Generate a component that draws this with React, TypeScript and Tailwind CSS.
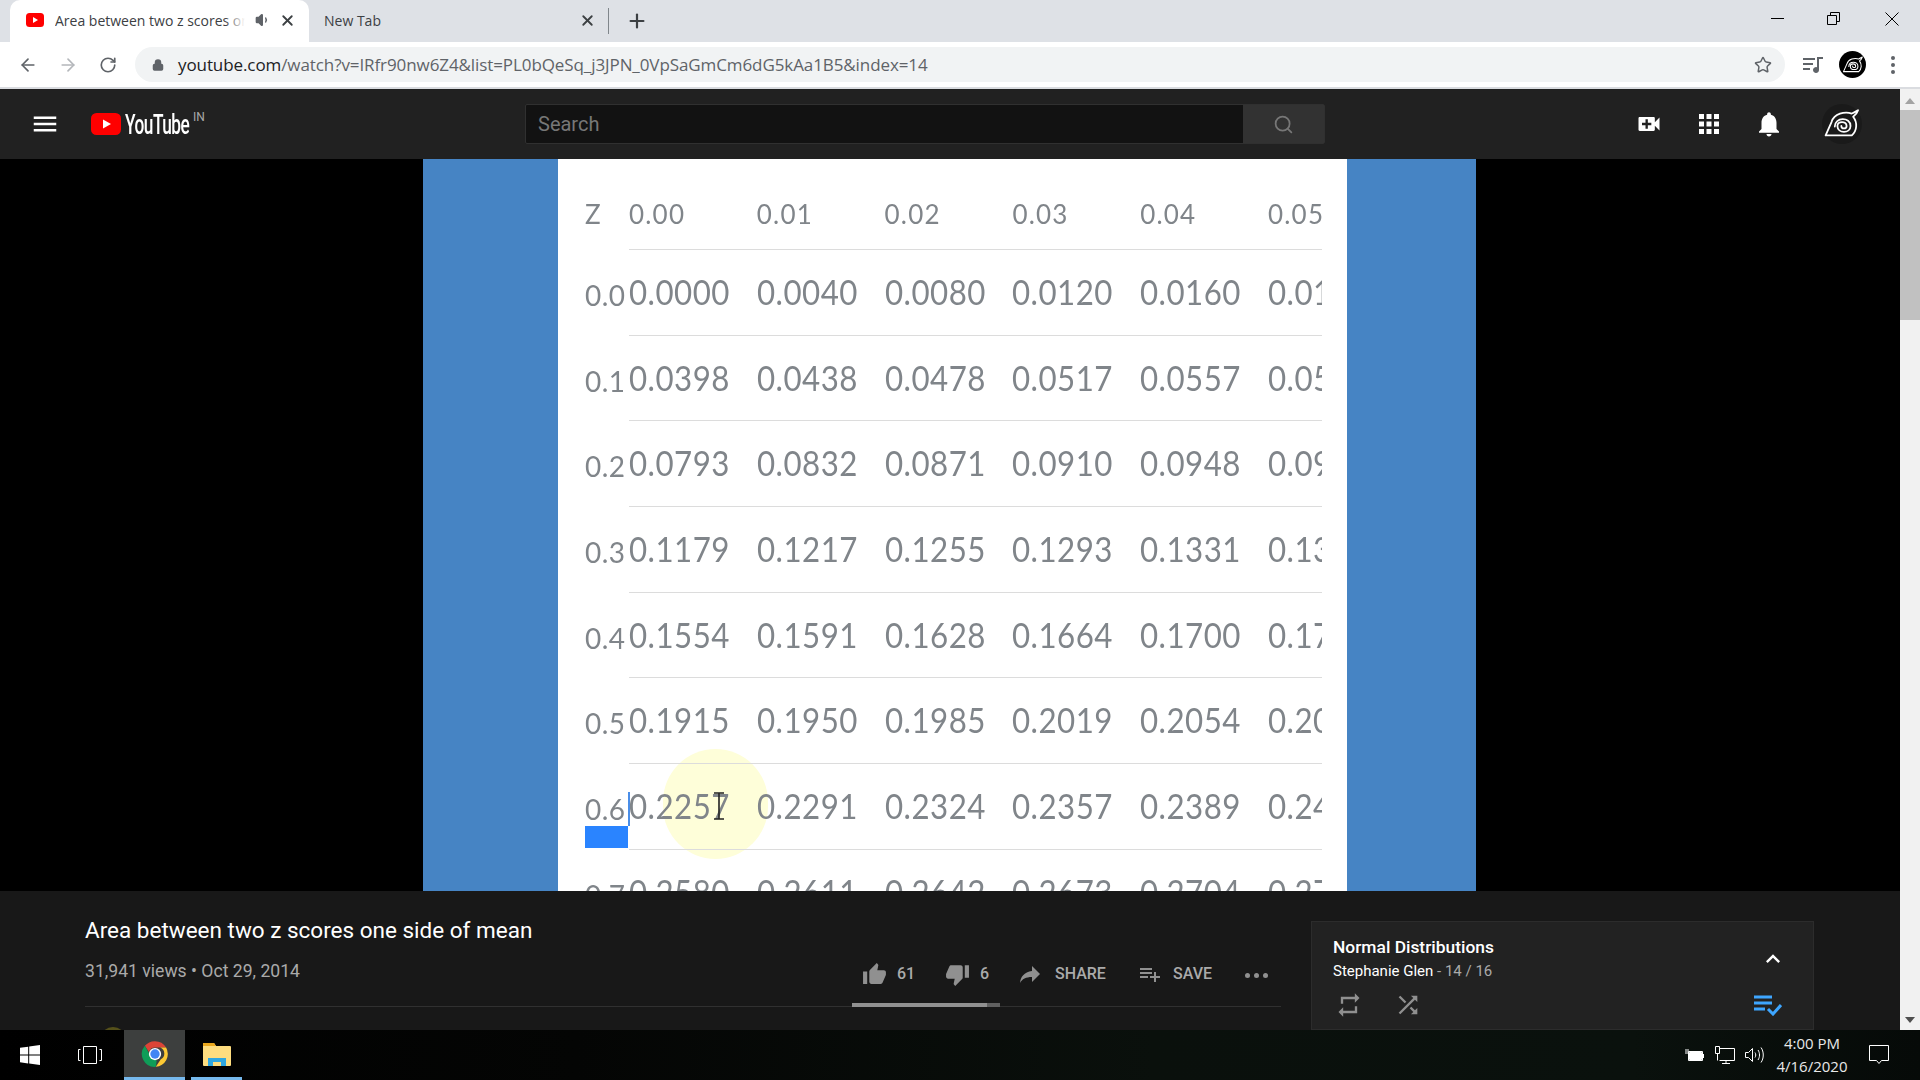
import { ArrowLeft, ArrowRight, RotateCw, Lock, Star, X, Plus, Volume1, Search } from 'lucide-react'

const rows = [
  ['0.0', '0.0000', '0.0040', '0.0080', '0.0120', '0.0160', '0.0199'],
  ['0.1', '0.0398', '0.0438', '0.0478', '0.0517', '0.0557', '0.0596'],
  ['0.2', '0.0793', '0.0832', '0.0871', '0.0910', '0.0948', '0.0987'],
  ['0.3', '0.1179', '0.1217', '0.1255', '0.1293', '0.1331', '0.1368'],
  ['0.4', '0.1554', '0.1591', '0.1628', '0.1664', '0.1700', '0.1736'],
  ['0.5', '0.1915', '0.1950', '0.1985', '0.2019', '0.2054', '0.2088'],
  ['0.6', '0.2257', '0.2291', '0.2324', '0.2357', '0.2389', '0.2422'],
  ['0.7', '0.2580', '0.2611', '0.2642', '0.2673', '0.2704', '0.2734'],
]
const headers = ['0.00', '0.01', '0.02', '0.03', '0.04', '0.05']

function Md({ d, className }: { d: string; className?: string }) {
  return (
    <svg viewBox="0 0 24 24" fill="currentColor" className={className}>
      <path d={d} />
    </svg>
  )
}

function Leaf({ className }: { className?: string }) {
  return (
    <svg viewBox="24 24 116 116" fill="none" stroke="currentColor" strokeWidth="5.500" strokeLinejoin="round" strokeLinecap="round" className={className}>
      <path d="M32 117 L50 76 C58 50 90 43 112 50 C118 48 124 44 131 40 C128 50 122 56 116 60 C130 78 128 102 112 117 Z" />
      <path d="M60 90 C60 60 108 60 108 88 C108 112 68 112 68 88 C68 72 96 72 96 88 C96 98 80 98 80 88" />
    </svg>
  )
}

function TableRow({ row }: { row: string[] }) {
  return (
    <div className="flex h-[85.7px] shrink-0 pr-[25px] pl-[27px]">
      <div className="w-[44px] pt-[29px] text-[28px] leading-[32px] tracking-[0.5px]">{row[0]}</div>
      <div className="flex flex-1 overflow-hidden border-b-[1.5px] border-[#dcdcdc] pt-[24px] text-[34px] leading-[36px] tracking-[0.5px]">
        {row.slice(1).map((v, i) => (
          <div key={i} className="w-[127.8px] shrink-0 origin-left scale-x-[0.92]">{v}</div>
        ))}
      </div>
    </div>
  )
}

function ChromeIcon() {
  return (
    <svg viewBox="0 0 48 48" className="h-[28px] w-[28px]">
      <path d="M24 2a22 22 0 0 1 19 11H24a11 11 0 0 0-10.4 7.4L6.6 10A22 22 0 0 1 24 2z" fill="#db4437" />
      <path d="M43 13a22 22 0 0 1-17.6 33L34 33a11 11 0 0 0-1-20z" fill="#fcc934" />
      <path d="M6.6 10l8.8 15.5A11 11 0 0 0 27 34.6L25.4 46A22 22 0 0 1 6.6 10z" fill="#0f9d58" />
      <circle cx="24" cy="24" r="10.5" fill="#fff" />
      <circle cx="24" cy="24" r="8" fill="#4285f4" />
    </svg>
  )
}

export default function App() {
  return (
    <div className="flex h-[1080px] w-[1920px] flex-col overflow-hidden bg-black font-['Roboto',sans-serif]">
      {/* tab strip */}
      <div className="flex h-[42px] shrink-0 items-end bg-[#dee1e6] pl-[10px] font-['Open_Sans',sans-serif] text-[14px] text-[#3c4043]">
        <div className="relative flex h-[42px] w-[299px] items-center rounded-t-[10px] bg-white pr-[13px] pb-[2px] pl-[16px]">
          <svg viewBox="0 0 18 14" className="h-[14px] w-[18px] shrink-0">
            <rect width="18" height="14" rx="3.5" fill="#ff0000" />
            <path d="M7 4l5 3-5 3z" fill="#fff" />
          </svg>
          <div className="relative ml-[11px] w-[190px] overflow-hidden whitespace-nowrap">
            Area between two z scores one side
            <div className="absolute top-0 right-0 h-full w-[20px] bg-gradient-to-r from-transparent to-white" />
          </div>
          <Volume1 size={16} className="ml-[10px] shrink-0 fill-[#5f6368] text-[#5f6368]" />
          <X size={17} strokeWidth={2.6} className="ml-auto shrink-0 text-[#3c4043]" />
        </div>
        <div className="flex h-[42px] w-[299px] items-center pr-[12px] pb-[2px] pl-[15px]">
          <span>New Tab</span>
          <X size={17} strokeWidth={2.6} className="ml-auto text-[#3c4043]" />
        </div>
        <div className="mb-[8px] h-[26px] w-px bg-[#80868b]" />
        <div className="flex h-[42px] items-center pl-[17px]">
          <Plus size={22} strokeWidth={2.4} className="text-[#3c4043]" />
        </div>
        <div className="ml-auto flex h-[42px] items-start text-black">
          <div className="mt-[18px] mr-[43px] h-px w-[13px] bg-black" />
          <svg viewBox="0 0 13 13" className="mt-[12px] mr-[45px] h-[13px] w-[13px]" fill="none" stroke="#000">
            <path d="M.5 3.5h9v9h-9zM3.5 3.5V.5h9v9h-3" />
          </svg>
          <svg viewBox="0 0 14 14" className="mt-[12px] mr-[21px] h-[14px] w-[14px]" fill="none" stroke="#000">
            <path d="M.5.5l13 13M13.5.5l-13 13" />
          </svg>
        </div>
      </div>

      {/* toolbar */}
      <div className="flex h-[47px] shrink-0 items-center border-b-2 border-[#dadce0] bg-white text-[#5f6368]">
        <ArrowLeft size={20} strokeWidth={2} className="ml-[18px]" />
        <ArrowRight size={20} strokeWidth={2} className="ml-[20px] text-[#b4b7bb]" />
        <RotateCw size={18} strokeWidth={2.2} className="ml-[21px]" />
        <div className="ml-[18px] flex h-[35px] w-[1650px] items-center rounded-full bg-[#f1f3f4] pr-[13px] pl-[17px]">
          <Lock size={12} strokeWidth={3} className="fill-[#5f6368]" />
          <div className="ml-[14px] font-['Open_Sans',sans-serif] text-[17px] tracking-[-0.09px] whitespace-nowrap text-[#202124]">
            youtube.com<span className="text-[#5f6368]">/watch?v=IRfr90nw6Z4&list=PL0bQeSq_j3JPN_0VpSaGmCm6dG5kAa1B5&index=14</span>
          </div>
          <Star size={18} strokeWidth={2} className="ml-auto" />
        </div>
        <svg viewBox="0 0 20 18" className="ml-[18px] h-[18px] w-[20px]" fill="#5f6368">
          <path d="M0 2h12v2H0zM0 7h10v2H0zM0 12h7v2H0zM14 1h6v2h-4v11a3 3 0 1 1-2-2.8z" />
        </svg>
        <div className="ml-[16px] flex h-[27px] w-[27px] items-center justify-center rounded-full bg-black text-white">
          <Leaf className="h-[22px] w-[22px]" />
        </div>
        <div className="ml-[25px] flex flex-col gap-[3px]">
          <div className="h-[4px] w-[4px] rounded-full bg-[#5f6368]" />
          <div className="h-[4px] w-[4px] rounded-full bg-[#5f6368]" />
          <div className="h-[4px] w-[4px] rounded-full bg-[#5f6368]" />
        </div>
      </div>

      <div className="flex min-h-0 flex-1">
        <div className="flex min-w-0 flex-1 flex-col">
          {/* youtube header */}
          <div className="flex h-[70px] shrink-0 items-center bg-[#212121] text-white">
            <Md d="M3 18h18v-2H3v2zm0-5h18v-2H3v2zm0-7v2h18V6H3z" className="ml-[30px] h-[30px] w-[30px]" />
            <svg viewBox="0 0 30 22" className="ml-[31px] h-[22px] w-[30px] shrink-0">
              <rect width="30" height="22" rx="5.5" fill="#ff0000" />
              <path d="M12 6.500l8 4.500-8 4.500z" fill="#fff" />
            </svg>
            <div className="relative ml-[4px] flex h-[30px] w-[94px] items-start pt-[1px]">
              <span className="inline-block origin-left scale-x-[0.64] text-[27px] leading-[30px] font-medium tracking-[-0.8px]">YouTube</span>
              <span className="absolute top-[-1px] left-[68px] text-[12px] text-[#aaa]">IN</span>
            </div>
            <div className="ml-[306px] flex h-[40px] w-[800px] rounded-[2px] border border-[#303030] bg-[#121212]">
              <div className="flex-1 pl-[12px] text-[20px] leading-[38px] text-[#777]">Search</div>
              <div className="flex w-[81px] items-center justify-center bg-[#323232]">
                <Search size={21} strokeWidth={2} className="text-[#777]" />
              </div>
            </div>
            <Md d="M17 10.500V7c0-.55-.45-1-1-1H4c-.55 0-1 .45-1 1v10c0 .55.45 1 1 1h12c.55 0 1-.45 1-1v-3.500l4 4v-11l-4 4zM14 13h-3v3H9v-3H6v-2h3V8h2v3h3v2z" className="ml-[310px] h-[28px] w-[28px]" />
            <Md d="M4 8h4V4H4v4zm6 12h4v-4h-4v4zm-6 0h4v-4H4v4zm0-6h4v-4H4v4zm6 0h4v-4h-4v4zm6-10v4h4V4h-4zm-6 4h4V4h-4v4zm6 6h4v-4h-4v4zm0 6h4v-4h-4v4z" className="ml-[31px] h-[30px] w-[30px]" />
            <Md d="M12 22c1.100 0 2-.9 2-2h-4c0 1.100.89 2 2 2zm6-6v-5c0-3.070-1.640-5.640-4.500-6.320V4c0-.83-.67-1.500-1.500-1.500s-1.500.67-1.500 1.500v.68C7.630 5.360 6 7.920 6 11v5l-2 2v1h16v-1l-2-2z" className="ml-[30px] h-[30px] w-[30px]" />
            <div className="ml-[38px] flex h-[40px] w-[40px] items-center justify-center rounded-full bg-[#1a1a1a] text-white">
              <Leaf className="h-[38px] w-[38px]" />
            </div>
          </div>

          {/* video */}
          <div className="flex h-[732px] shrink-0 justify-center bg-black pr-[1px]">
            <div className="flex w-[1053px] overflow-hidden">
              <div className="w-[135px] shrink-0 bg-[#4684c4]" />
              <div className="relative flex w-[789px] shrink-0 flex-col overflow-hidden bg-white font-['Lato',sans-serif] text-[#80858a] blur-[0.5px]">
                <div className="absolute top-[590px] left-[105px] h-[110px] w-[105px] rounded-full bg-[#fefed9]" />
                <div className="relative flex h-[91px] shrink-0 pr-[25px] pl-[27px] text-[26px] leading-[30px] tracking-[1.2px]">
                  <div className="w-[44px] pt-[40px]">Z</div>
                  <div className="flex flex-1 overflow-hidden border-b-[1.5px] border-[#dcdcdc] pt-[40px]">
                    {headers.map((h) => (
                      <div key={h} className="w-[127.8px] shrink-0">{h}</div>
                    ))}
                  </div>
                </div>
                <div className="relative flex flex-col">
                  {rows.map((r) => (
                    <TableRow key={r[0]} row={r} />
                  ))}
                </div>
                {/* selection and caret sit over the table */}
                <div className="absolute top-[667px] left-[27px] h-[22px] w-[43px] bg-[#2a84ff]" />
                <div className="absolute top-[633px] left-[70px] h-[34px] w-[2px] bg-[#4a8ee8]" />
                <svg viewBox="0 0 12 28" className="absolute top-[633px] left-[155px] h-[28px] w-[12px]" fill="none" stroke="#222" strokeWidth="1.600">
                  <path d="M1 1h10M1 27h10M6 1v26" />
                </svg>
              </div>
              <div className="w-[129px] shrink-0 bg-[#4684c4]" />
            </div>
          </div>

          {/* below the video */}
          <div className="relative flex min-h-0 flex-1 overflow-hidden bg-[#181818] pl-[85px] text-[#aaa]">
            <div className="absolute top-[136px] left-[100px] h-[30px] w-[26px] rounded-full bg-[#55501a]" />
            <div className="flex w-[1196px] shrink-0 flex-col">
              <div className="mt-[25px] text-[22.500px] leading-[28px] text-white">Area between two z scores one side of mean</div>
              <div className="relative mt-[8px] flex h-[55px] items-center border-b border-[#303030] pb-[16px]">
                <div className="text-[17.600px]">31,941 views • Oct 29, 2014</div>
                <div className="ml-auto flex items-center pt-[6px] pr-[13px] text-[16px] font-medium text-[#aaa]">
                  <Md d="M1 21h4V9H1v12zm22-11c0-1.100-.9-2-2-2h-6.310l.95-4.570.03-.32c0-.41-.17-.79-.44-1.060L14.170 1 7.590 7.590C7.220 7.950 7 8.450 7 9v10c0 1.100.9 2 2 2h9c.83 0 1.540-.5 1.800-1.220l3.020-7.050c.09-.23.14-.47.14-.73v-2z" className="h-[25px] w-[25px] text-[#909090]" />
                  <span className="ml-[10px] w-[48px]">61</span>
                  <Md d="M15 3H6c-.83 0-1.540.5-1.840 1.220l-3.020 7.050c-.09.23-.14.47-.14.73v2c0 1.100.9 2 2 2h6.310l-.95 4.570-.03.32c0 .41.17.79.44 1.060L9.830 23l6.590-6.590c.36-.36.58-.86.58-1.410V5c0-1.100-.9-2-2-2zm4 0v12h4V3h-4z" className="h-[25px] w-[25px] text-[#909090]" />
                  <span className="ml-[10px] w-[38px]">6</span>
                  <Md d="M14 9V4l8 8-8 8v-5c-6 0-10 2-12 6 .5-6 4-11 12-12z" className="h-[24px] w-[24px] text-[#909090]" />
                  <span className="ml-[13px] w-[83px]">SHARE</span>
                  <Md d="M14 10H2v2h12v-2zm0-4H2v2h12V6zm4 8v-4h-2v4h-4v2h4v4h2v-4h4v-2h-4zM2 16h8v-2H2v2z" className="h-[24px] w-[24px] text-[#909090]" />
                  <span className="ml-[11px] w-[72px]">SAVE</span>
                  <div className="flex gap-[4px] pt-[3px]">
                    <div className="h-[5px] w-[5px] rounded-full bg-[#909090]" />
                    <div className="h-[5px] w-[5px] rounded-full bg-[#909090]" />
                    <div className="h-[5px] w-[5px] rounded-full bg-[#909090]" />
                  </div>
                </div>
                <div className="absolute right-[281px] bottom-[-1px] flex h-[4px] w-[148px]">
                  <div className="w-[135px] bg-[#909090]" />
                  <div className="flex-1 bg-[#606060]" />
                </div>
              </div>
            </div>
            {/* playlist card */}
            <div className="mt-[30px] ml-[30px] w-[503px] shrink-0 border border-[#2c2c2c] bg-[#222222] pt-[15px] pr-[26px] pl-[21px]">
              <div className="flex items-start justify-between">
                <div>
                  <div className="text-[17.400px] leading-[20px] font-medium text-white">Normal Distributions</div>
                  <div className="mt-[4px] text-[15px] leading-[20px]">
                    <span className="text-white">Stephanie Glen</span> - 14 / 16
                  </div>
                </div>
                <Md d="M7.410 15.410L12 10.830l4.590 4.580L18 14l-6-6-6 6z" className="mt-[8px] h-[28px] w-[28px] text-white" />
              </div>
              <div className="mt-[10px] flex items-center text-[#909090]">
                <Md d="M7 7h10v3l4-4-4-4v3H5v6h2V7zm10 10H7v-3l-4 4 4 4v-3h12v-6h-2v4z" className="ml-[2px] h-[28px] w-[28px]" />
                <Md d="M10.590 9.170L5.410 4 4 5.410l5.170 5.170 1.420-1.410zM14.500 4l2.040 2.040L4 18.590 5.410 20 17.960 7.460 20 9.500V4h-5.500zm.33 9.410l-1.410 1.410 3.130 3.130L14.500 20H20v-5.500l-2.040 2.040-3.130-3.130z" className="ml-[31px] h-[28px] w-[28px]" />
                <svg viewBox="0 0 28 22" className="mr-[5px] ml-auto h-[22px] w-[28px]" fill="none" stroke="#3ea6ff" strokeWidth="3">
                  <path d="M0 3h18M0 9h18M0 15h11M14 15l5 5 8-9" />
                </svg>
              </div>
            </div>
          </div>
        </div>

        {/* page scrollbar */}
        <div className="flex w-[20px] shrink-0 flex-col items-center bg-[#f1f1f1]">
          <div className="mt-[9px] h-0 w-0 border-x-[5px] border-b-[6px] border-x-transparent border-b-[#a3a3a3]" />
          <div className="mt-[6px] h-[210px] w-full bg-[#c1c1c1]" />
          <div className="mt-auto mb-[7px] h-0 w-0 border-x-[5px] border-t-[6px] border-x-transparent border-t-[#505050]" />
        </div>
      </div>

      {/* taskbar */}
      <div className="flex h-[50px] shrink-0 items-center bg-[linear-gradient(90deg,#000_0%,#040504_30%,#0a100c_60%,#0a110d_85%,#060a08_100%)] text-white">
        <svg viewBox="0 0 20 20" className="ml-[20px] h-[20px] w-[20px]" fill="#fff">
          <path d="M0 2.800l8.200-1.100v7.900H0zM9.200 1.500L20 0v9.600H9.200zM0 10.500h8.200v7.900L0 17.200zM9.200 10.500H20V20L9.200 18.500z" />
        </svg>
        <svg viewBox="0 0 24 18" className="ml-[38px] h-[18px] w-[24px]" fill="none" stroke="#fff">
          <path d="M5.500.5h13v17h-13zM2.500 3.500H.5v11h2M21.500 3.500h2v11h-2" />
        </svg>
        <div className="ml-[22px] flex h-[50px] w-[61px] items-center justify-center border-b-[3px] border-[#76b9ed] bg-[#3d3f3e]">
          <ChromeIcon />
        </div>
        <div className="ml-[6px] flex h-[50px] w-[51px] items-center justify-center border-b-[3px] border-[#76b9ed]">
          <svg viewBox="0 0 28 24" className="h-[24px] w-[28px]">
            <path d="M0 2a1 1 0 0 1 1-1h10l2 3h14a1 1 0 0 1 1 1v18a1 1 0 0 1-1 1H1a1 1 0 0 1-1-1z" fill="#fedd7f" />
            <path d="M0 1h11l2 3H0z" fill="#eaa81e" />
            <path d="M5 16h18v8h-5v-4h-8v4H5z" fill="#2fa7e0" />
          </svg>
        </div>

        <div className="ml-auto flex items-center">
          <svg viewBox="0 0 20 14" className="h-[14px] w-[20px]" fill="none" stroke="#fff">
            <path d="M3.500 3.500h14v9h-14zM18.500 6v4" />
            <path d="M4.500 4.500h12v7h-12z" fill="#fff" />
            <path d="M0 5h3M1 1v3M3 1v3" />
          </svg>
          <svg viewBox="0 0 20 20" className="ml-[10px] h-[20px] w-[20px]" fill="none" stroke="#fff">
            <path d="M4.500 3.500h15v12h-15M.5 1.500h4v7h-4zM2.500 8.500v7M11 15.500v3M7 18.500h8" />
          </svg>
          <svg viewBox="0 0 20 20" className="ml-[10px] h-[20px] w-[20px]" fill="none" stroke="#fff">
            <path d="M.5 7.500h3l4-4v13l-4-4h-3zM10 7.500c1 1.500 1 3.500 0 5M13 5c2 3 2 7 0 10M16 2.500c3 4 3 11 0 15" />
          </svg>
          <div className="ml-[2px] w-[90px] text-center font-['Open_Sans',sans-serif] text-[15px] leading-[23.500px] text-[#e8e8e8]">
            <div>4:00 PM</div>
            <div>4/16/2020</div>
          </div>
          <svg viewBox="0 0 20 20" className="mr-[31px] ml-[12px] h-[20px] w-[20px]" fill="none" stroke="#fff">
            <path d="M.5.500h19v15h-7l-2.500 3-2.500-3h-7z" />
          </svg>
        </div>
      </div>
    </div>
  )
}
